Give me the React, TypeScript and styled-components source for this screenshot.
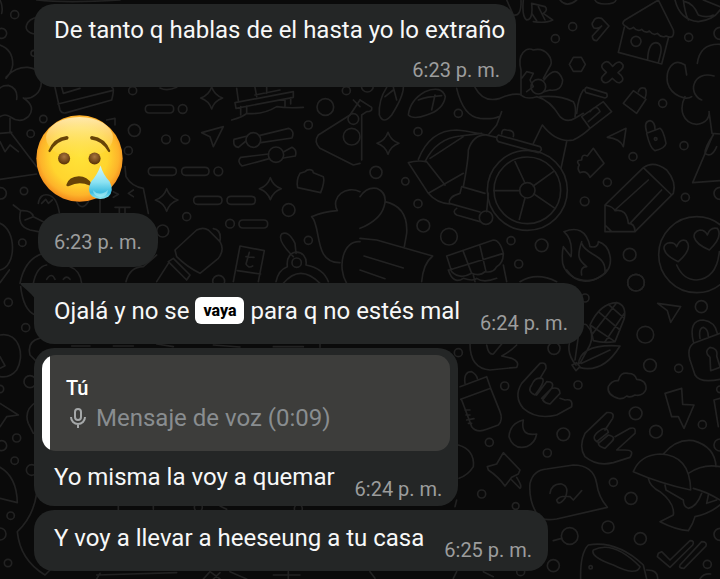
import React from "react";
import styled, { createGlobalStyle, css } from "styled-components";

const GlobalStyle = createGlobalStyle`
  *, *::before, *::after { box-sizing: border-box; }
  body { margin: 0; background: #0a0a0a; }
`;

const Chat = styled.main`
  position: relative;
  min-height: 100vh;
  overflow: hidden;
  background: #0a0a0a;
  font-family: Roboto, "Noto Sans", sans-serif;
`;

const Backdrop = styled.svg`
  position: absolute;
  inset: 0;
  width: 100%;
  height: 100%;
  fill: none;
  stroke: #222222;
  stroke-width: 5px;
  stroke-linecap: round;
  stroke-linejoin: round;
`;

const Messages = styled.ol`
  position: relative;
  display: flex;
  flex-direction: column;
  align-items: flex-start;
  gap: 4px;
  margin: 0;
  padding: 4px 34px 8px;
  list-style: none;
`;

const Bubble = styled.li<{ $first?: boolean }>`
  position: relative;
  max-width: 100%;
  border-radius: 20px;
  background: #242626;
  ${(p) =>
    p.$first &&
    css`
      margin-top: 12px;
      border-top-left-radius: 0;
    `}
`;

const Tail = styled.svg`
  position: absolute;
  top: 0;
  left: -14px;
  width: 15px;
  height: 16px;
  fill: #242626;
`;

const Body = styled.div<{ $kind?: "stacked" | "reply" }>`
  display: flex;
  align-items: flex-end;
  justify-content: space-between;
  column-gap: 20px;
  padding: 14px 16px 9px 20px;
  ${(p) => p.$kind === "reply" && css`padding: 12px 16px 5px 20px;`}
  ${(p) =>
    p.$kind === "stacked" &&
    css`
      flex-direction: column;
      row-gap: 4px;
      padding: 12px 11px 5px 20px;

      time {
        margin-right: 5px;
      }
    `}
`;

const Text = styled.p`
  margin: 0;
  padding-bottom: 10px;
  color: #f7f8f8;
  font-size: 24px;
  line-height: 28px;
`;

const Time = styled.time`
  flex: none;
  color: #9c9d9d;
  font-size: 20px;
  line-height: 24px;
  white-space: nowrap;
`;

const Chip = styled.mark`
  display: inline-block;
  padding: 0 8px;
  border-radius: 6px;
  background: #fff;
  color: #000;
  font-size: 16px;
  font-weight: 800;
  line-height: 27px;
  vertical-align: top;
`;

const Sticker = styled.li`
  display: flex;
  flex-direction: column;
  align-items: flex-start;
  gap: 11px;
  margin-top: 24px;
`;

const Emoji = styled.svg`
  display: block;
  width: 87px;
  height: 87px;
  margin-left: 2px;
`;

const TimePill = styled.div`
  display: flex;
  margin-left: 4px;
  padding: 17px 16px 13px;
  border-radius: 24px;
  background: #242626;
`;

const Quote = styled.blockquote`
  margin: 7px 8px 0;
  padding: 19px 16px 17px 24px;
  border-radius: 14px;
  background: linear-gradient(to right, #fff 8px, #3d3d3b 8px);
`;

const Author = styled.cite`
  display: block;
  color: #fff;
  font-size: 20px;
  font-style: normal;
  font-weight: 500;
  line-height: 28px;
`;

const Voice = styled.div`
  display: flex;
  align-items: center;
  gap: 6px;
  color: #898d90;
  font-size: 24px;
  line-height: 32px;
`;

const Mic = styled.svg`
  width: 24px;
  height: 24px;
  fill: none;
  stroke: #a5a8a9;
  stroke-width: 2px;
`;

type Dot = [number, number, number];

const sparkle = (x: number, y: number, r: number) => {
  const k = r * 0.25;
  return `M${x} ${y - r}Q${x + k} ${y - k} ${x + r} ${y}Q${x + k} ${y + k} ${x} ${y + r}Q${x - k} ${y + k} ${x - r} ${y}Q${x - k} ${y - k} ${x} ${y - r}Z`;
};

const pill = (x: number, y: number, w: number) =>
  `M${x + 12} ${y}h${w - 24}q12 0 12 12t-12 12h${24 - w}q-12 0-12-12t12-12Z`;

interface Tile {
  x: number;
  y: number;
  dots: Dot[];
  lines: string[];
}

const tiles: Tile[] = [
  {
    x: 0,
    y: 0,
    dots: [
      [44, 44, 12], [5, 100, 15], [102, 160, 9], [398, 272, 12], [548, 327, 13], [130, 357, 11], [92, 401, 11],
      [403, 391, 18], [385, 452, 12], [498, 418, 13], [556, 418, 13], [976, 321, 25], [925, 375, 12], [1060, 357, 16],
      [1055, 410, 25], [655, 514, 13], [72, 573, 11], [2, 580, 17], [560, 650, 12], [866, 630, 19], [690, 671, 13],
      [488, 693, 18], [67, 728, 11], [925, 721, 12], [1039, 272, 12], [656, 844, 18], [760, 420, 22], [828, 464, 23],
      [890, 788, 14],
    ],
    lines: [
      pill(436, 315, 85), pill(445, 502, 84), pill(545, 502, 82), pill(581, 589, 85), pill(681, 589, 85), pill(717, 660, 86),
      sparkle(635, 294, 33), sparkle(500, 600, 34), sparkle(811, 566, 33),
      "M0 135Q40 150 38 195Q36 215 18 235M18 232C50 190 125 190 124 245C124 280 95 300 70 294M50 298Q55 265 25 256Q8 256 0 264M70 294Q110 320 85 350Q60 372 30 350Q15 340 0 350",
      "M30 355V395L110 500M0 400L35 397M0 425l15 30 15-20 25 20M0 538L110 522",
      "M104 102C60 95 80 55 112 52M110 0Q200 10 360 0M0 0Q10 20 5 40",
      "M165 262L180 330Q185 342 200 338L335 300Q345 262 335 262M185 262L190 280L240 265M174 312L336 272M480 264Q500 275 530 262",
      "M705 308L880 275V292L708 325ZM722 320V345M740 318V340M855 297V318M872 293V312M695 360Q730 350 740 340Q790 345 830 320Q860 325 910 322M710 265L715 302M765 262L770 290M765 285L840 270M800 262V280",
      "M738 423L715 442Q698 440 702 418L742 408M780 406L866 385Q885 392 876 414L782 428M806 462L722 472Q710 485 726 498L808 476M850 456L876 442Q892 450 886 468L850 474",
      "M605 398L670 380L640 440L630 410Z",
      "M1080 300L1050 345L955 405Q940 425 960 445L1060 495L1080 490M1060 300L1080 320",
      "M900 520L915 515Q925 505 938 512L940 518L970 530Q975 545 962 578L893 563Q888 540 900 520Z",
      "M935 650Q970 635 1012 632C990 590 1040 555 1080 575M935 650C965 680 940 790 1020 788M1080 725C1030 720 1010 800 1040 850",
      "M525 750L590 690Q610 680 625 690L660 725Q675 750 655 775L600 820Q560 800 530 770ZM505 785L520 775L570 825L560 840ZM505 790L470 845M640 686Q665 690 660 722",
      "M720 738L793 752L775 845M720 738L700 845M712 812L782 822",
      "M748 757L738 792Q745 806 758 798M738 770L762 772",
      "M880 770Q830 720 845 702Q865 690 885 730L888 760M828 845Q835 810 862 800C855 740 925 745 918 795Q970 805 985 845M850 850Q900 790 960 850",
      "M375 500L378 530Q395 560 430 565L445 640M340 575L355 583L340 592M400 570L385 580L400 590M345 622H390M358 622V640M375 622V640M300 600V638M230 605Q245 635 265 605M320 360L345 355V375",
      "M40 615L62 632Q50 680 90 690L115 695M62 632Q95 630 100 650L75 660M100 650L130 665M115 610Q120 580 145 585Q170 590 178 638M125 610l12-12 8 12 12-10",
      "M0 670C50 690 50 800 0 810M60 850Q75 775 130 760M100 850Q110 800 140 795M210 800Q240 810 245 850M140 838Q155 815 165 838M190 838Q200 825 210 838M378 845Q390 800 430 800L470 765",
    ],
  },
  {
    x: 1080,
    y: 0,
    dots: [
      [638, 80, 12], [586, 116, 12], [986, 112, 12], [1080, 100, 18], [295, 340, 12], [174, 395, 12], [48, 517, 18],
      [136, 544, 11], [908, 310, 12], [972, 437, 12], [819, 470, 12], [742, 547, 12], [674, 604, 13], [976, 592, 12],
      [1080, 580, 18], [174, 611, 12], [190, 677, 19], [267, 710, 25], [453, 722, 12], [545, 736, 19], [476, 792, 12],
      [809, 764, 19], [828, 848, 25], [828, 124, 15], [535, 260, 22], [378, 653, 20], [502, 571, 120], [502, 571, 100],
      [502, 571, 23], [887, 417, 4], [1010, 764, 114], [22, 258, 18],
    ],
    lines: [
      sparkle(84, 430, 33),
      "M640 172H664L676 193L664 214H640L628 193Z",
      "M495 549L465 485M520 558L580 515M522 582L585 625M495 594L478 658M479 572H402",
      "M80 262Q55 300 58 345Q70 375 95 345Q130 290 130 262M145 345Q150 300 195 275Q245 255 256 290Q250 330 200 345Q160 360 145 345ZM175 300Q200 290 245 287M225 285L215 330M100 262L110 300M75 290L100 270",
      "M0 300L35 322Q38 335 20 335L5 345V480",
      "M345 262Q370 310 420 295Q450 280 480 283M290 265Q310 350 360 355Q400 358 415 350M425 335L410 375L387 402",
      "M483 285V210C470 160 500 140 520 150C560 140 580 180 572 195L550 235M552 240Q590 190 608 240Q605 275 570 270L552 275M485 235l15-20 20 5-10 20 10 20-20 15",
      "M483 285Q500 300 530 290Q570 300 600 350Q620 370 645 355L670 340M540 290Q600 285 640 305Q650 320 645 350",
      "M520 430L547 375Q590 430 640 420Q670 405 690 385L755 335L730 305L665 350L690 385M620 425L603 505M650 340Q655 290 670 270M680 262L740 280Q745 292 735 294L678 278Q670 268 680 262ZM690 335Q710 310 720 335L685 365",
      "M415 405L540 440Q550 450 535 458L415 425Q405 415 415 405ZM425 402Q425 385 440 390Q465 390 460 410",
      "M175 478Q210 390 290 390Q340 395 410 412M195 485Q230 415 300 408L365 400M210 475L310 410M145 488Q170 480 200 485L255 555M145 488L205 580L310 520M205 580Q230 610 270 612M310 560Q325 480 325 450Q340 400 385 405M305 560L375 580M305 560L300 580Q265 590 268 610L360 636M290 625Q275 635 290 645L360 665M385 580L380 635",
      "M440 0L460 45Q485 50 483 0M490 0Q485 50 500 60Q520 60 515 10L555 20Q565 30 550 40L578 60Q560 70 520 65M515 40L530 62M535 20L555 60",
      "M600 0Q620 25 650 0M705 0Q710 12 735 12Q765 12 768 0",
      "M700 65Q705 50 725 55L747 78L710 122Q697 122 697 108L725 78Q715 88 702 84Q692 72 700 65Z",
      "M895 0L795 60Q780 72 800 80Q808 92 820 82Q832 97 845 88Q857 102 868 93Q880 108 892 100Q905 115 918 108Q945 120 940 90L895 0M793 82L775 157L905 192L925 115M863 178Q865 130 887 128Q908 130 902 160L895 188",
      "M945 0Q960 60 1015 65Q1060 60 1080 30M970 0Q975 40 985 60M975 5Q1000 10 1015 45Q1040 55 1060 45M1030 0L1080 20",
      "M728 192Q740 178 751 191L758 199L766 191Q780 180 789 195Q791 203 784 209L774 218L784 227Q795 241 779 248Q771 249 766 243L757 235L747 244Q733 254 725 240Q723 232 730 226L739 217L730 208Q722 200 728 192Z",
      "M975 195C940 170 915 210 923 250C935 290 980 300 995 290M975 290C955 330 970 370 1010 373C1040 370 1050 350 1047 335L1056 400L1080 402M1012 190Q1020 130 1080 133M975 195L980 225M1062 228C1000 210 980 280 1025 300",
      "M820 272L858 298L830 340L790 310ZM835 275Q840 260 855 265Q862 275 855 295M860 400L900 385Q910 390 918 430Q915 445 885 452Q870 445 860 400ZM860 395Q850 365 870 362Q885 365 885 388",
      "M742 412L798 385L790 440Q780 415 742 412Z",
      "M700 445L732 490L690 532Q680 510 660 518Q650 505 658 495Q645 480 665 480Q665 460 682 468Z",
      "M735 615L850 503Q880 480 920 510Q950 545 940 580L825 695H735ZM850 503L935 585M865 540L765 630M905 570L810 670M735 615Q760 620 765 632Q800 625 805 670Q825 670 825 695M735 675L755 695",
      "M1060 402L998 548L1080 542M1060 405Q1035 440 1035 460Q1055 475 1070 440",
      "M612 695C650 680 680 690 690 740Q715 745 715 725C750 735 765 790 735 820C690 860 620 840 608 790Q605 760 610 740L633 770Q640 720 612 695ZM665 725C650 770 655 780 680 800Q660 800 665 825M665 730C680 770 740 760 735 820",
      "M950 795Q970 840 1010 840Q1070 835 1078 755M955 785C900 760 905 730 930 728Q945 728 950 740Q960 715 978 722Q1000 745 955 785ZM1048 750C990 725 995 695 1020 690Q1035 690 1042 705Q1050 680 1072 685Q1090 710 1048 750Z",
      "M0 590Q20 560 50 565Q85 580 72 620Q60 660 0 685M75 605Q145 620 140 700L133 740M0 715L50 720L218 768Q190 790 185 845M12 768L130 804M0 810L75 836",
      "M260 768L400 720Q420 720 430 760Q430 790 410 800Q400 820 375 815Q360 830 335 820Q300 840 275 815ZM310 755L335 820M360 738L378 815M268 810L430 760M340 825L345 845M430 795L440 845M480 845Q530 815 590 845",
    ],
  },
  {
    x: 0,
    y: 810,
    dots: [
      [25, 97, 12], [77, 173, 12], [90, 335, 18], [0, 357, 11], [50, 504, 12], [5, 527, 15], [44, 572, 11],
      [95, 600, 16], [32, 737, 11], [0, 792, 18], [24, 879, 11], [595, 712, 12], [895, 716, 12],
    ],
    lines: [
      "M0 195C60 185 75 260 50 300Q30 325 0 320M0 260L15 287L0 295M0 400L55 435L20 440L0 470M0 592Q50 620 52 698L0 685",
      "M110 395Q70 420 85 460L100 490M118 205Q80 215 90 255L110 275M62 50Q70 120 105 135M110 670Q100 740 52 785Q60 870 135 915L150 900M0 38L28 0",
      "M290 915L530 908M300 910L290 927M610 927l20-22 30 22M690 905l50 22M640 927L660 908M820 915H900M865 905V927",
      "M215 228H270M340 228H400M470 222L520 230M640 225l80 6M820 230h90M960 222v10M355 708v12M460 708v10M660 708l20 10",
    ],
  },
  {
    x: 1080,
    y: 810,
    dots: [
      [675, 84, 12], [828, 38, 25], [856, 194, 25], [1024, 110, 18], [295, 248, 12], [582, 235, 18], [434, 348, 12],
      [654, 345, 12], [870, 286, 19], [956, 295, 12], [388, 517, 12], [610, 493, 19], [562, 549, 12], [827, 430, 19],
      [888, 485, 19], [1027, 464, 12], [1080, 525, 18], [760, 637, 12], [365, 672, 12], [813, 685, 18], [467, 708, 10],
      [744, 771, 18], [629, 798, 25], [841, 806, 18], [580, 887, 18], [1042, 883, 12], [692, 892, 5], [1080, 793, 18],
      [1080, 358, 10], [482, 905, 12],
    ],
    lines: [
      "M690 165Q720 100 770 98Q800 105 793 145L765 215Q730 220 700 212ZM690 165L765 215M715 125L780 180M745 103L793 145M770 98L695 195M793 130L735 215",
      "M648 285Q610 240 640 190Q670 155 680 165Q705 190 690 225L660 280M655 285Q660 220 780 228Q730 310 660 293M665 280L750 240M636 285L650 278L660 290L648 302ZM645 270L655 200",
      "M893 100L962 110L932 157L922 122Z",
      "M1000 215Q985 150 1030 150Q1065 155 1072 190M1020 205Q1015 175 1030 172Q1045 178 1045 200M1080 190L1000 220Q980 235 990 270L1005 315Q1020 340 1080 328M1050 262Q1030 245 1050 232Q1075 235 1070 258L1080 290M1050 262L1052 302L1080 292",
      "M330 222Q330 295 390 300L470 292Q480 275 455 265L425 258Q450 245 470 225M380 225Q385 255 400 252L425 222",
      "M540 280Q560 275 558 295L540 325M540 280L485 340Q460 380 490 415Q530 450 590 435L635 410Q640 385 615 390L600 385M515 345Q525 320 545 325Q560 330 525 375Q500 365 515 345M530 375L560 335Q585 335 575 355L545 385M548 390L575 355Q600 350 600 370L570 402Q555 400 548 390",
      "M740 428Q765 425 758 445L735 480M740 428L675 490Q655 530 675 560Q710 590 760 578L810 562Q825 540 795 540L770 540L825 490Q830 470 810 475L765 500M715 517Q690 505 715 485Q740 465 745 487L710 515M715 520L745 495Q770 500 755 515L735 535Q715 530 715 520",
      "M300 350L380 320L392 355L302 388M315 340Q310 305 335 305Q350 315 352 325M305 390L335 470Q350 490 380 478L415 465Q430 450 420 425L392 355M315 420h15M318 435h12M320 450l22-4M325 460h10",
      "M490 450Q450 460 447 500Q460 540 500 530Q525 520 530 492Q480 500 490 450Z",
      "M430 548L480 600L475 612L455 622L435 648Q415 620 385 600L382 590L410 582ZM455 630L480 655Q488 650 470 622",
      "M295 525Q345 540 340 590Q325 615 297 625",
      "M775 385Q740 375 745 350Q755 330 775 332Q780 305 805 310Q825 310 830 328Q860 330 858 358Q850 380 825 375Q810 385 800 378Q790 388 775 385Z",
      "M915 370L965 355L968 403L1002 405L972 475L955 440L935 440ZM1080 385L1062 390L1075 470",
      "M540 745Q505 700 510 640Q520 600 560 597L640 585Q700 585 710 640Q715 680 742 712L590 747Q560 752 540 745ZM570 670Q575 640 605 642Q630 650 615 685Q595 710 590 690Q600 675 630 680L640 690L665 662",
      "M820 605Q840 555 900 552Q990 555 992 660Q900 640 820 605ZM910 552Q950 505 1000 512Q1065 530 1068 590M985 610Q1030 580 1080 590M1000 655Q1040 665 1080 690M865 625Q870 650 900 665Q945 700 940 735L900 755Q950 780 985 782Q1000 760 1005 740Q1050 730 1080 705M915 645L918 660L970 690Q970 710 985 715Q1010 710 1025 670M1045 675L1040 700L1070 690",
      "M895 850L905 845L930 870L990 812Q1005 812 998 825L930 892L892 860ZM960 885L1025 815Q1042 815 1038 828L972 895Q955 895 960 885Z",
      "M662 927Q660 850 685 825Q770 810 850 885L860 927M700 840Q760 810 840 890Q830 920 760 885Q690 860 700 840ZM860 900Q895 900 893 927",
      "M620 0Q650 45 700 30Q735 15 740 0M265 0Q280 45 310 25Q340 35 350 25Q370 40 410 25M580 812L605 805M1020 927Q1030 910 1052 912M285 710L290 690M30 905L45 925M290 905L280 925M370 905L400 920",
    ],
  },
];

const Wallpaper = () => (
  <Backdrop viewBox="0 0 2160 1737" preserveAspectRatio="xMinYMin slice" aria-hidden="true">
    {tiles.map((t) => (
      <g key={`${t.x}-${t.y}`} transform={`translate(${t.x} ${t.y})`}>
        {t.lines.map((d) => (
          <path key={d} d={d} />
        ))}
        {t.dots.map(([x, y, r]) => (
          <circle key={`${x}-${y}-${r}`} cx={x} cy={y} r={r} />
        ))}
      </g>
    ))}
  </Backdrop>
);

const CryingFace = () => (
  <Emoji viewBox="0 0 260 260" role="img" aria-label="Cara llorando">
    <defs>
      <radialGradient id="skin" cx="50%" cy="47%" r="53%">
        <stop offset="0" stopColor="#ffe339" />
        <stop offset=".62" stopColor="#ffd52e" />
        <stop offset=".86" stopColor="#fdb32a" />
        <stop offset="1" stopColor="#f48b1c" />
      </radialGradient>
      <linearGradient id="shine" x1="0" y1="0" x2="0" y2="1">
        <stop offset="0" stopColor="#fff3c4" stopOpacity=".85" />
        <stop offset="1" stopColor="#ffe680" stopOpacity="0" />
      </linearGradient>
      <radialGradient id="eye" cx="50%" cy="35%" r="60%">
        <stop offset="0" stopColor="#a9763f" />
        <stop offset="1" stopColor="#5e3608" />
      </radialGradient>
      <linearGradient id="tear" x1="0" y1="0" x2="0" y2="1">
        <stop offset="0" stopColor="#d5f8fb" />
        <stop offset=".5" stopColor="#8be2f2" />
        <stop offset=".8" stopColor="#3dbce0" />
        <stop offset="1" stopColor="#8ee9f3" />
      </linearGradient>
    </defs>
    <circle cx="130" cy="130" r="129" fill="url(#skin)" />
    <ellipse cx="130" cy="68" rx="100" ry="62" fill="url(#shine)" />
    <g fill="#674307">
      <path d="M37 107Q52 68 92 63Q101 66 95 73Q62 76 43 110Q38 113 37 107Z" />
      <path d="M222 107Q207 68 167 63Q158 66 164 73Q197 76 216 110Q221 113 222 107Z" />
    </g>
    <ellipse cx="84" cy="130" rx="18" ry="18" fill="url(#eye)" />
    <ellipse cx="175" cy="130" rx="18" ry="18" fill="url(#eye)" />
    <path d="M91 208Q98 184 128 183Q154 183 166 206Q169 214 160 211Q130 196 99 212Q89 215 91 208Z" fill="#674307" />
    <path d="M193 151Q200 178 220 199Q235 228 216 244Q190 258 168 243Q151 228 164 200Q184 178 193 151Z" fill="url(#tear)" />
    <path d="M170 225Q190 246 215 224Q214 244 192 245Q172 243 170 225Z" fill="#c9fafa" opacity=".45" />
  </Emoji>
);

const Sent = ({ at }: { at: string }) => (
  <Time dateTime={`18:${at}`}>{`6:${at}\u00a0p.\u00a0m.`}</Time>
);

export default function App() {
  return (
    <Chat>
      <GlobalStyle />
      <Wallpaper />
      <Messages>
        <Bubble>
          <Body $kind="stacked">
            <Text>De tanto q hablas de el hasta yo lo extraño</Text>
            <Sent at="23" />
          </Body>
        </Bubble>
        <Sticker>
          <CryingFace />
          <TimePill>
            <Sent at="23" />
          </TimePill>
        </Sticker>
        <Bubble $first>
          <Tail viewBox="0 0 15 16" aria-hidden="true">
            <path d="M1 0H15V16Q13 12 1 2Q0 0 1 0Z" />
          </Tail>
          <Body>
            <Text>
              Ojalá y no se <Chip>vaya</Chip> para q no estés mal
            </Text>
            <Sent at="24" />
          </Body>
        </Bubble>
        <Bubble>
          <Quote>
            <Author>Tú</Author>
            <Voice>
              <Mic viewBox="0 0 24 24" aria-hidden="true">
                <rect x="9" y="3" width="6" height="11" rx="3" />
                <path d="M5 11a7 7 0 0 0 14 0M12 18v4" />
              </Mic>
              Mensaje de voz (0:09)
            </Voice>
          </Quote>
          <Body $kind="reply">
            <Text>Yo misma la voy a quemar</Text>
            <Sent at="24" />
          </Body>
        </Bubble>
        <Bubble>
          <Body>
            <Text>Y voy a llevar a heeseung a tu casa</Text>
            <Sent at="25" />
          </Body>
        </Bubble>
      </Messages>
    </Chat>
  );
}
